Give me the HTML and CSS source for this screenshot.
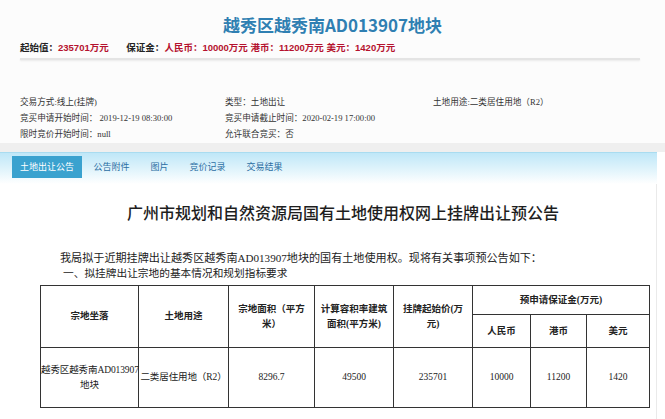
FILE: index.html
```html
<!DOCTYPE html>
<html lang="zh-CN">
<head>
<meta charset="utf-8">
<title>越秀区越秀南AD013907地块</title>
<link rel="stylesheet" href="styles.css">
</head>
<body>
<div class="page">
  <div class="top">
    <h1 class="title">越秀区越秀南AD013907地块</h1>
    <div class="price">
      <span class="lbl">起始值：</span><span class="red">235701万元</span>
      <span class="lbl gap">保证金：</span><span class="red">人民币：</span><span class="red">10000万元</span>
      <span class="red">港币：</span><span class="red">11200万元</span>
      <span class="red">美元：</span><span class="red">1420万元</span>
    </div>
    <div class="sep"></div>
    <div class="info">
      <div>交易方式:线上(挂牌)</div>
      <div>类型：土地出让</div>
      <div>土地用途:二类居住用地（R2）</div>
      <div>竞买申请开始时间：&nbsp;2019-12-19 08:30:00</div>
      <div>竞买申请截止时间：2020-02-19 17:00:00</div>
      <div></div>
      <div>限时竞价开始时间：null</div>
      <div>允许联合竞买：否</div>
      <div></div>
    </div>
  </div>
  <div class="band"></div>
  <div class="tabs">
    <span class="tab active">土地出让公告</span>
    <span class="tab">公告附件</span>
    <span class="tab">图片</span>
    <span class="tab">竞价记录</span>
    <span class="tab">交易结果</span>
  </div>
  <div class="content">
    <h2 class="heading">广州市规划和自然资源局国有土地使用权网上挂牌出让预公告</h2>
    <p class="para">我局拟于近期挂牌出让越秀区越秀南AD013907地块的国有土地使用权。现将有关事项预公告如下：</p>
    <p class="para sec">一、拟挂牌出让宗地的基本情况和规划指标要求</p>
    <table class="grid">
      <colgroup>
        <col class="c98"><col class="c90"><col class="c86"><col class="c79">
        <col class="c79"><col class="c58"><col class="c56"><col class="c63">
      </colgroup>
      <tr class="h1">
        <th rowspan="2">宗地坐落</th>
        <th rowspan="2">土地用途</th>
        <th rowspan="2">宗地面积（平方米）</th>
        <th rowspan="2">计算容积率建筑面积(平方米)</th>
        <th rowspan="2">挂牌起始价(万元)</th>
        <th colspan="3">预申请保证金(万元)</th>
      </tr>
      <tr class="h2">
        <th>人民币</th>
        <th>港币</th>
        <th>美元</th>
      </tr>
      <tr class="row">
        <td class="loc"><span class="nw">越秀区越秀南AD013907</span><br>地块</td>
        <td class="nw">二类居住用地（R2）</td>
        <td>8296.7</td>
        <td>49500</td>
        <td>235701</td>
        <td>10000</td>
        <td>11200</td>
        <td>1420</td>
      </tr>
    </table>
  </div>
</div>
</body>
</html>
```

FILE: styles.css
```css
* { box-sizing: border-box; }
html, body { margin: 0; padding: 0; }
body {
  background: #ffffff;
  font-family: "Liberation Serif", "Noto Sans CJK SC", serif;
  color: #222;
  width: 665px;
  height: 419px;
  overflow: hidden;
}
.page { width: 665px; }
.top {
  background: #fcfcfc;
  padding: 14px 0 0 0;
  height: 143px;
}
.title {
  margin: 0;
  text-align: center;
  font-family: "Noto Sans CJK SC", sans-serif;
  font-size: 17px;
  font-weight: 700;
  color: #2f7fb2;
  line-height: 22px;
}
.price {
  margin: 5px 0 0 20px;
  font-family: "Liberation Sans", "Noto Sans CJK SC", sans-serif;
  font-size: 9.5px;
  font-weight: 700;
  line-height: 14px;
  color: #222;
  white-space: nowrap;
}
.price .red { color: #b5122e; }
.price .gap { margin-left: 15px; }
.sep {
  margin: 3px 0 0 20px;
  width: 620px;
  height: 2px;
  background: #e4e4e4;
  box-shadow: 0 1px 2px rgba(0,0,0,0.08);
}
.info {
  margin: 35px 0 0 20px;
  display: grid;
  grid-template-columns: 205px 208px 200px;
  font-size: 8.6px;
  line-height: 15.8px;
  color: #333;
  white-space: nowrap;
}
.band {
  height: 9px;
  background: #efefef;
}
.tabs {
  width: 657px;
  height: 32px;
  border-top: 1px solid #a9dcf0;
  background: linear-gradient(#bfe7f8 0%, #def3fb 50%, #ffffff 100%);
  display: flex;
  align-items: flex-start;
  padding: 3px 0 0 12px;
  font-size: 9px;
}
.tab {
  height: 22px;
  line-height: 22px;
  padding: 0 10.5px;
  color: #2b6ea3;
  font-family: "Noto Sans CJK SC", sans-serif;
}
.tab.active {
  background: #3aa2cf;
  color: #ffffff;
  padding: 0 8px;
  margin-right: 1px;
}
.content {
  width: 657px;
  padding: 17px 0 0 0;
  border-right: 1px solid #eaeaea;
  height: 240px;
}
.heading {
  margin: 0;
  text-align: center;
  font-family: "Noto Sans CJK SC", sans-serif;
  font-size: 16px;
  font-weight: 500;
  line-height: 22px;
  color: #1e1e1e;
  padding-left: 30px;
}
.para {
  margin: 28px 0 0 60px;
  font-size: 11.1px;
  line-height: 15px;
  color: #222;
  white-space: nowrap;
}
.para.sec { margin: 0 0 0 63px; font-size: 10.7px; }
.grid {
  margin: 4px 0 0 40px;
  border-collapse: collapse;
  table-layout: fixed;
  width: 609px;
  font-size: 9.5px;
  color: #222;
}
.c98 { width: 98px; }
.c90 { width: 90px; }
.c86 { width: 86px; }
.c79 { width: 79px; }
.c58 { width: 58px; }
.c56 { width: 56px; }
.c63 { width: 63px; }
.grid th, .grid td {
  border: 1px solid #333;
  text-align: center;
  vertical-align: middle;
  padding: 0 3px;
  line-height: 15px;
}
.grid th { font-weight: 700; }
.grid .h1 th { height: 29px; }
.grid .h2 th { height: 33px; }
.grid .row td { height: 60px; }
.grid td.loc, .grid td.nw { padding: 0; }
.nw { white-space: nowrap; letter-spacing: -0.1px; }
```
